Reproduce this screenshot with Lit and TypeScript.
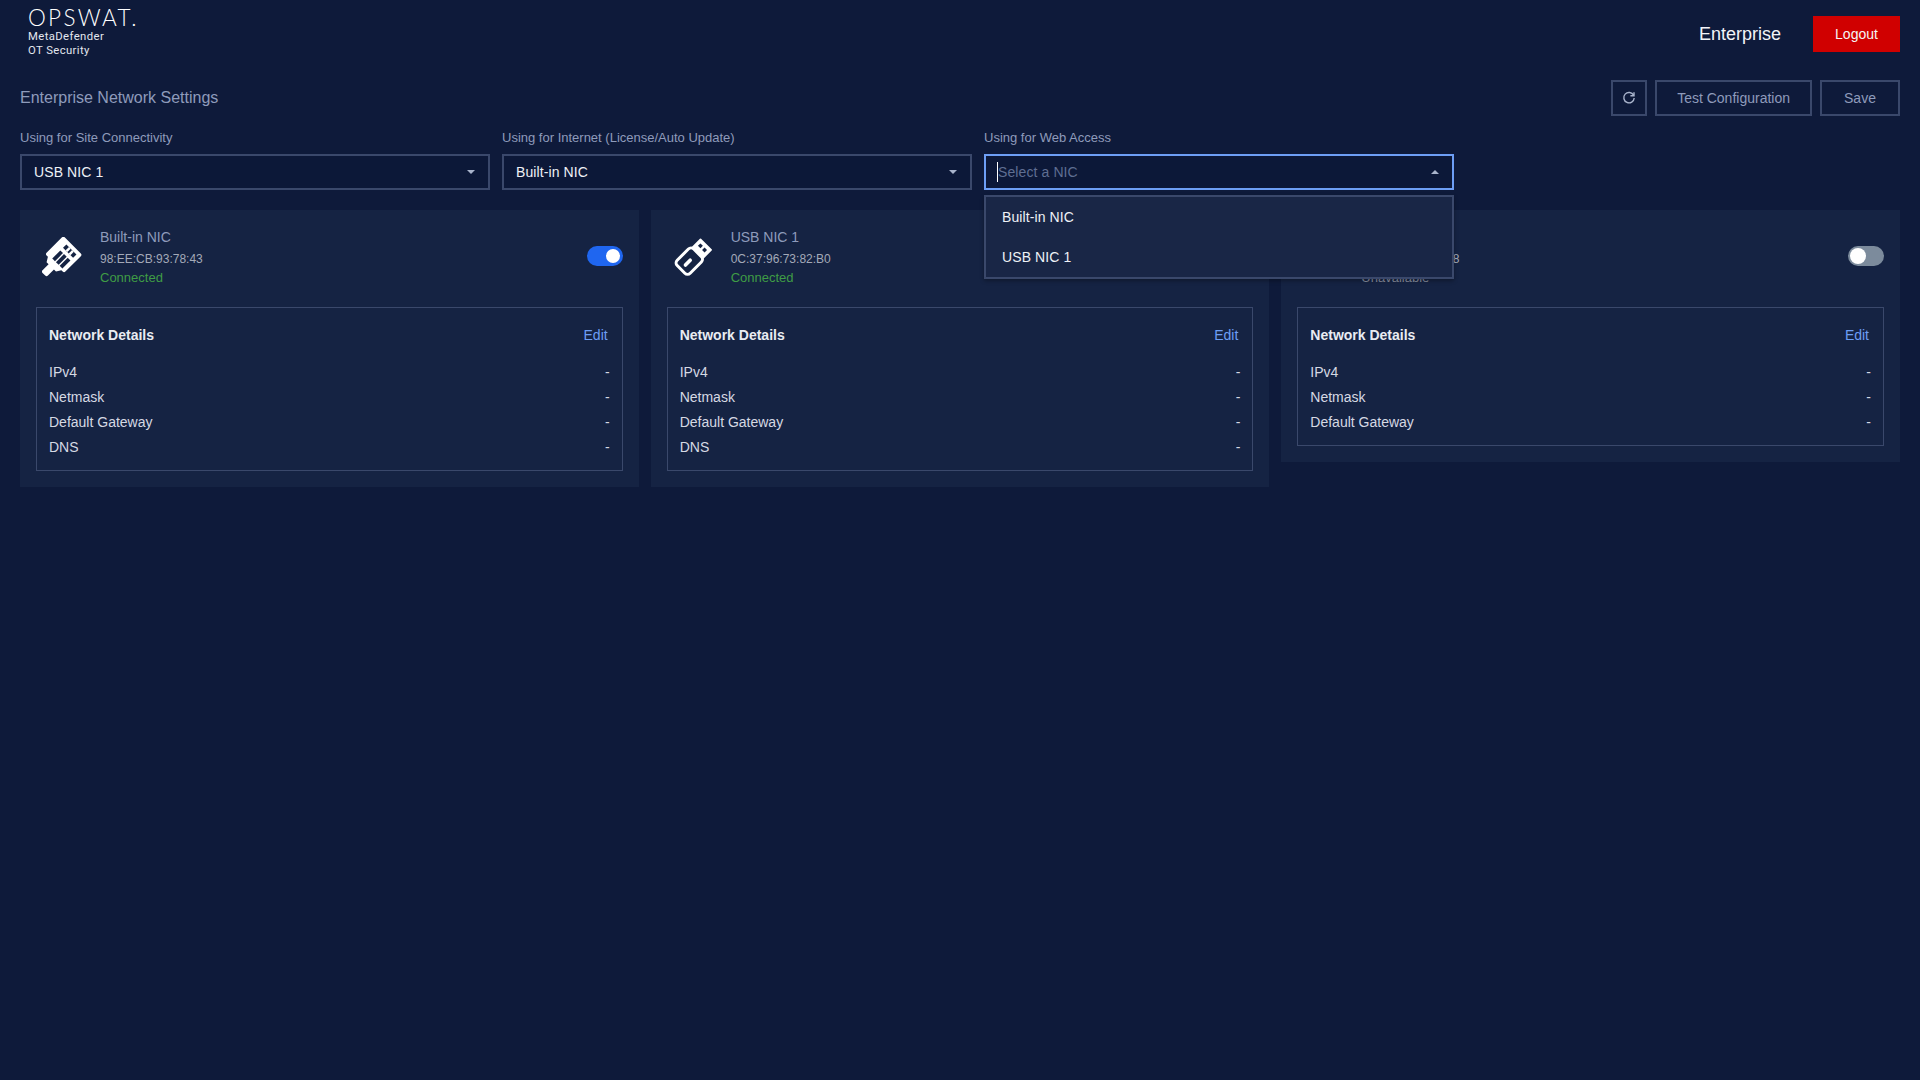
import { LitElement, html, css } from "lit";
import { customElement } from "lit/decorators.js";

const plugIcon = html`<svg class="nic-icon" viewBox="0 0 48 48">
  <g transform="translate(21.6 28.6) rotate(45) scale(1.14)" fill="#fff">
    <path d="M-10 -21h20a2 2 0 0 1 2 2v23a2 2 0 0 1 -2 2h-2l-3 5h-3v9a2 2 0 0 1 -2 2h-4a2 2 0 0 1 -2 -2v-9h-3l-3 -5h-2a2 2 0 0 1 -2 -2v-23a2 2 0 0 1 2 -2z"/>
    <g fill="#152343">
      <rect x="-7.5" y="-8" width="4" height="12"/>
      <rect x="-2" y="-8" width="4" height="12"/>
      <rect x="3.5" y="-8" width="4" height="12"/>
      <rect x="-7.5" y="-17" width="15" height="5"/>
    </g>
    <rect x="-3.6" y="-17" width="2.6" height="5"/>
    <rect x="1" y="-17" width="2.6" height="5"/>
  </g>
</svg>`;

const usbIcon = html`<svg class="nic-icon" viewBox="0 0 48 48">
  <g transform="translate(24.5 24) rotate(45)">
    <path d="M-9 -22h18a1 1 0 0 1 1 1v16h-20v-16a1 1 0 0 1 1 -1z" fill="#fff"/>
    <rect x="-5.6" y="-17.5" width="4.2" height="4.2" fill="#152343"/>
    <rect x="1.4" y="-17.5" width="4.2" height="4.2" fill="#152343"/>
    <rect x="-11" y="-7" width="22" height="28" rx="4.5" fill="#152343" stroke="#fff" stroke-width="3.6"/>
    <path d="M0 5.5v8" stroke="#fff" stroke-linecap="round" stroke-width="4.4"/>
  </g>
</svg>`;

const refreshIcon = html`<svg class="refresh" viewBox="0 0 14 14" fill="none" stroke="currentColor" stroke-width="1.4">
  <path d="M11.6 4.2A5.2 5.2 0 1 0 12.2 7"/>
  <path d="M12 1.2v3.6H8.4"/>
</svg>`;

const caret = (up: boolean) => html`<span class="caret ${up ? "up" : ""}"></span>`;

interface Nic {
  name: string;
  mac: string;
  status: string;
  on: boolean;
  icon: unknown;
  rows: string[];
}

const nics: Nic[] = [
  { name: "Built-in NIC", mac: "98:EE:CB:93:78:43", status: "Connected", on: true, icon: plugIcon, rows: ["IPv4", "Netmask", "Default Gateway", "DNS"] },
  { name: "USB NIC 1", mac: "0C:37:96:73:82:B0", status: "Connected", on: true, icon: usbIcon, rows: ["IPv4", "Netmask", "Default Gateway", "DNS"] },
  { name: "USB NIC 2", mac: "00:E0:46:68:12:48", status: "Unavailable", on: false, icon: usbIcon, rows: ["IPv4", "Netmask", "Default Gateway"] },
];

@customElement("app-root")
export class AppRoot extends LitElement {
  static styles = css`
    :host {
      display: block;
      min-height: 1080px;
      background: #0e1a3a;
      font-family: "Liberation Sans", Arial, sans-serif;
      color: #fff;
      font-size: 14px;
    }
    .top {
      display: flex;
      justify-content: space-between;
      height: 64px;
      padding: 0 20px 0 28px;
    }
    .logo {
      padding-top: 7px;
      display: flex;
      flex-direction: column;
    }
    .logo-mark {
      font-family: "Lato", sans-serif;
      font-weight: 300;
      font-size: 22.5px;
      line-height: 22px;
      letter-spacing: 2.3px;
      color: #fff;
      margin-bottom: 1px;
    }
    .logo-sub {
      font-family: "Roboto", sans-serif;
      font-size: 11.3px;
      line-height: 13.5px;
      letter-spacing: 0.4px;
      color: #e3e7ef;
    }
    .account {
      display: flex;
      align-items: center;
      gap: 32px;
      padding-top: 16px;
      height: 36px;
    }
    .account-name {
      font-size: 18px;
      color: #f2f4f8;
    }
    .logout {
      width: 87px;
      height: 36px;
      border: 0;
      background: #d00000;
      color: #f5f5f5;
      font: inherit;
      padding: 0;
    }
    .toolbar {
      display: flex;
      align-items: center;
      justify-content: space-between;
      padding: 16px 20px 0;
    }
    .title {
      font-size: 16px;
      color: #8e9bbb;
    }
    .actions {
      display: flex;
      gap: 8px;
    }
    .btn {
      height: 36px;
      box-sizing: border-box;
      border: 2px solid #3a486b;
      background: transparent;
      color: #8e9bbb;
      font: inherit;
      padding: 0 20px;
      display: flex;
      align-items: center;
      justify-content: center;
    }
    .btn.icon {
      width: 36px;
      padding: 0;
    }
    .btn.save {
      width: 80px;
      padding: 0;
    }
    .refresh {
      width: 14px;
      height: 14px;
      color: #a9b4cc;
    }
    .selects {
      display: grid;
      grid-template-columns: repeat(3, 470px);
      column-gap: 12px;
      padding: 12px 20px 0;
    }
    .field label {
      display: block;
      font-size: 13px;
      line-height: 20px;
      color: #8e9bbb;
      margin-bottom: 6px;
    }
    .field {
      position: relative;
    }
    .select {
      box-sizing: border-box;
      height: 36px;
      border: 2px solid #3a486b;
      display: flex;
      align-items: center;
      justify-content: space-between;
      padding: 0 13px 0 12px;
      color: #eef1f6;
      background: #0c1838;
      letter-spacing: 0.1px;
    }
    .select.open {
      border-color: #6d9ef5;
    }
    .placeholder {
      color: #5f6e92;
      border-left: 1px solid #fff;
      margin-left: -1px;
      line-height: 20px;
    }
    .caret {
      width: 0;
      height: 0;
      border-left: 4px solid transparent;
      border-right: 4px solid transparent;
      border-top: 4px solid #a9b4cc;
    }
    .caret.up {
      border-top: 0;
      border-bottom: 4px solid #a9b4cc;
    }
    .menu {
      position: absolute;
      left: 0;
      right: 0;
      top: 67px;
      box-sizing: border-box;
      height: 84px;
      background: #192646;
      border: 2px solid #3a486b;
      box-shadow: 0 2px 4px rgba(0, 0, 0, 0.3);
      z-index: 2;
    }
    .menu div {
      height: 40px;
      line-height: 40px;
      padding-left: 16px;
      color: #eef1f6;
      letter-spacing: 0.1px;
    }
    .cards {
      display: grid;
      grid-template-columns: repeat(3, 1fr);
      gap: 12px;
      padding: 20px 20px 0;
      align-items: start;
    }
    .card {
      background: #152343;
      padding: 16px;
    }
    .card-head {
      display: flex;
      align-items: center;
      height: 64px;
      margin-bottom: 17px;
    }
    .nic-icon {
      width: 40px;
      height: 40px;
      flex: none;
      margin: 11px 18px 0 6px;
      align-self: flex-start;
    }
    .nic-text {
      flex: 1;
      display: flex;
      flex-direction: column;
      align-self: flex-start;
    }
    .nic-name {
      font-size: 14px;
      line-height: 23px;
      color: #8e9bbb;
    }
    .nic-mac {
      font-size: 12px;
      line-height: 20px;
      color: #a3a9b8;
    }
    .nic-status {
      font-size: 13px;
      line-height: 18px;
      color: #3f9c45;
    }
    .nic-status.off {
      color: #8a90a0;
    }
    .toggle {
      position: relative;
      width: 36px;
      height: 20px;
      border-radius: 10px;
      background: #1f66f0;
      flex: none;
      margin-bottom: 4px;
    }
    .toggle::after {
      content: "";
      position: absolute;
      top: 3px;
      right: 3px;
      width: 14px;
      height: 14px;
      border-radius: 50%;
      background: #fff;
    }
    .toggle.off {
      background: #7c8b9c;
    }
    .toggle.off::after {
      right: auto;
      left: 2px;
      top: 2px;
      width: 16px;
      height: 16px;
    }
    .details {
      border: 1px solid #3a486b;
      padding: 12px 12px 10px;
    }
    .details-head {
      display: flex;
      justify-content: space-between;
      line-height: 30px;
      margin-bottom: 10px;
      padding-right: 2px;
      color: #e9ecf2;
      font-weight: 700;
      height: 30px;
    }
    .edit {
      color: #6d9ef5;
      font-weight: 400;
    }
    .row {
      display: flex;
      justify-content: space-between;
      height: 25px;
      line-height: 25px;
      color: #d5d9e3;
    }
  `;

  private renderCard(n: Nic) {
    return html`<div class="card">
      <div class="card-head">
        ${n.icon}
        <div class="nic-text">
          <span class="nic-name">${n.name}</span>
          <span class="nic-mac">${n.mac}</span>
          <span class="nic-status ${n.on ? "" : "off"}">${n.status}</span>
        </div>
        <div class="toggle ${n.on ? "" : "off"}"></div>
      </div>
      <div class="details">
        <div class="details-head"><span>Network Details</span><span class="edit">Edit</span></div>
        ${n.rows.map((r) => html`<div class="row"><span>${r}</span><span>-</span></div>`)}
      </div>
    </div>`;
  }

  render() {
    return html`
      <div class="top">
        <div class="logo">
          <div class="logo-mark">OPSWAT.</div>
          <div class="logo-sub">MetaDefender</div>
          <div class="logo-sub">OT Security</div>
        </div>
        <div class="account">
          <span class="account-name">Enterprise</span>
          <button class="logout">Logout</button>
        </div>
      </div>
      <div class="toolbar">
        <div class="title">Enterprise Network Settings</div>
        <div class="actions">
          <button class="btn icon">${refreshIcon}</button>
          <button class="btn">Test Configuration</button>
          <button class="btn save">Save</button>
        </div>
      </div>
      <div class="selects">
        <div class="field">
          <label>Using for Site Connectivity</label>
          <div class="select"><span>USB NIC 1</span>${caret(false)}</div>
        </div>
        <div class="field">
          <label>Using for Internet (License/Auto Update)</label>
          <div class="select"><span>Built-in NIC</span>${caret(false)}</div>
        </div>
        <div class="field">
          <label>Using for Web Access</label>
          <div class="select open"><span class="placeholder">Select a NIC</span>${caret(true)}</div>
          <div class="menu"><div>Built-in NIC</div><div>USB NIC 1</div></div>
        </div>
      </div>
      <div class="cards">${nics.map((n) => this.renderCard(n))}</div>
    `;
  }
}
